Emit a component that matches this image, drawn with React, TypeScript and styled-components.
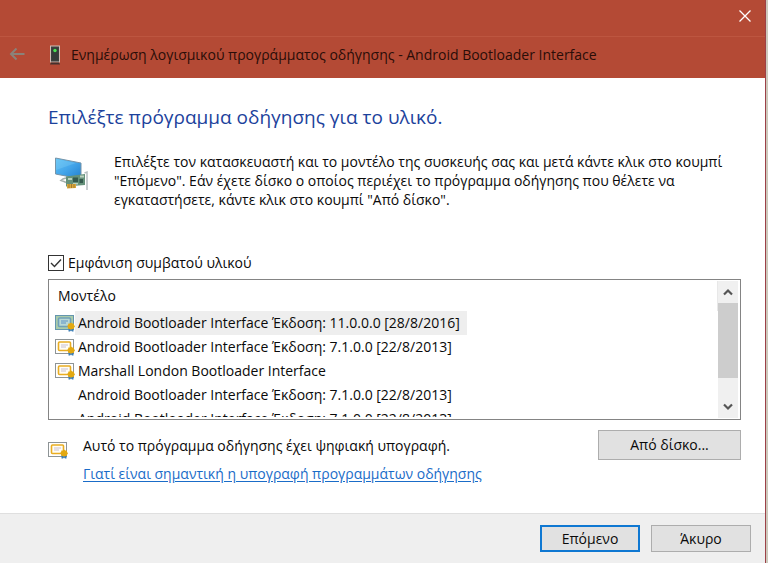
import React, { useState } from "react";
import styled, { createGlobalStyle } from "styled-components";

const GlobalStyle = createGlobalStyle`
  *, *::before, *::after { box-sizing: border-box; }
  body {
    margin: 0;
    background: #cdc9bc;
    color: #0a0a0a;
    font: 500 14px/20px "Open Sans", "Noto Sans", sans-serif;
  }
  button, input { font: inherit; color: inherit; }
`;

const Wizard = styled.main`
  display: flex;
  flex-direction: column;
  min-height: 100vh;
  margin-right: 2px;
  background: #fff;
  border-right: 1px solid #9c4148;
  overflow: hidden;
`;

const CaptionBar = styled.div`
  display: flex;
  justify-content: flex-end;
  height: 37px;
  background: #b44a35;
  border-bottom: 1px solid #bd5640;
`;

const CloseButton = styled.button`
  display: grid;
  place-items: center;
  width: 40px;
  height: 32px;
  padding: 0;
  border: 0;
  background: none;
`;

const TitleBar = styled.header`
  display: flex;
  align-items: center;
  height: 41px;
  padding: 0 9px 6px;
  background: #b44a35;
`;

const BackButton = styled.button`
  display: grid;
  width: 40px;
  padding: 0;
  border: 0;
  background: none;
`;

const WindowTitle = styled.h1`
  margin: 0 0 0 10px;
  font-size: 14px;
  font-weight: 500;
  line-height: 20px;
  color: #2a0d08;
  white-space: nowrap;
`;

const Content = styled.section`
  flex: 1;
  padding: 24px 24px 28px 48px;
`;

const Heading = styled.h2`
  margin: 0;
  font-size: 19px;
  font-weight: 400;
  line-height: 30px;
  color: #1c429c;
`;

const Intro = styled.div`
  display: flex;
  gap: 24px;
  margin-top: 20px;
  padding-left: 6px;

  svg { flex: none; margin-top: 4px; }
`;

const IntroText = styled.p`
  margin: 0;
  line-height: 19px;
  white-space: nowrap;
`;

const CheckLabel = styled.label`
  display: flex;
  align-items: center;
  gap: 4px;
  width: fit-content;
  margin-top: 44px;
`;

const CheckBox = styled.input`
  appearance: none;
  width: 16px;
  height: 16px;
  margin: 0;
  border: 1px solid #333;
  background: #fff;

  &:checked {
    background: url("data:image/svg+xml,%3Csvg xmlns='http://www.w3.org/2000/svg' viewBox='0 0 14 14'%3E%3Cpath d='M2 7l3.5 3.5L12 3.5' fill='none' stroke='%23333' stroke-width='1.4'/%3E%3C/svg%3E");
  }
`;

const ListFrame = styled.div`
  display: flex;
  height: 141px;
  margin-top: 6px;
  padding: 1px 2px 1px 6px;
  border: 1px solid #848484;
`;

const ListViewport = styled.div`
  flex: 1;
  height: 136px;
  overflow: hidden;
`;

const ModelTable = styled.table`
  width: 100%;
  border-collapse: collapse;
  font-weight: 400;
`;

const ModelHeader = styled.th`
  height: 30px;
  padding: 0 3px;
  border-right: 1px solid #e8e8e8;
  font-weight: 500;
  text-align: left;
`;

const ModelCell = styled.td`
  height: 24px;
  padding: 0;
`;

const ModelItem = styled.div<{ $selected: boolean }>`
  display: flex;
  align-items: center;
  width: fit-content;
  height: 24px;
  white-space: nowrap;

  svg { flex: none; }
  span {
    padding: 2px 7px 2px 3px;
    background: ${(p) => (p.$selected ? "#eee" : "transparent")};
  }
`;

const IconSlot = styled.i`
  width: 20px;
`;

const ScrollBar = styled.div`
  display: flex;
  flex-direction: column;
  width: 20px;
  background: #f0f0f0;
`;

const ScrollButton = styled.button`
  display: grid;
  place-items: center;
  height: 22px;
  padding: 0;
  border: 0;
  background: none;
`;

const ScrollTrack = styled.div`
  flex: 1;
`;

const ScrollThumb = styled.div`
  height: 75px;
  background: #cdcdcd;
`;

const SignatureRow = styled.div`
  display: flex;
  align-items: flex-start;
  margin-top: 10px;

  > svg { flex: none; margin-top: 11px; }
`;

const SignatureText = styled.div`
  flex: 1;
  margin-left: 15px;
  white-space: nowrap;

  p { margin: 6px 0 8px; }
`;

const Link = styled.a`
  color: #1a6cc8;
  text-decoration: underline;
  text-underline-offset: 2px;
`;

const PushButton = styled.button<{ $primary?: boolean; $wide?: boolean }>`
  width: ${(p) => (p.$wide ? 143 : 100)}px;
  height: ${(p) => (p.$wide ? 30 : 27)}px;
  padding: 0;
  border: ${(p) => (p.$primary ? "2px solid #0f78d2" : "1px solid #adadad")};
  background: #e1e1e1;
  line-height: 20px;
`;

const Footer = styled.footer`
  display: flex;
  justify-content: flex-end;
  gap: 11px;
  height: 50px;
  padding: 11px 14px 0;
  border-top: 1px solid #dfdfdf;
  background: #efefef;
`;

function CertificateIcon({ selected = false }: { selected?: boolean }) {
  return (
    <svg width="20" height="18" viewBox="0 0 20 18" aria-hidden="true">
      <rect x=".5" y="1.5" width="18" height="14" fill={selected ? "#a9cba9" : "#fff"} stroke={selected ? "#6496ae" : "#8e9496"} />
      <rect x="3.5" y="4" width="12" height="8.500" rx="1" fill={selected ? "#b9d8d5" : "#fffdf5"} stroke={selected ? "#6fa1b8" : "#e9ad22"} strokeWidth="1.600" />
      <path d="M6 7h7M6 9h5" stroke={selected ? "#5d93c8" : "#c9bfcf"} />
      <path d="M13.500 13h5v4.500h-1.500l-1-1-1 1h-1.500z" fill="#3e7fb5" />
      <path d="M16 8.500l1.300.9 1.600.2.200 1.500.9 1.400-1 1.200-.3 1.300-1.500.1-1.200.7-1.300-.8-1.500-.2-.2-1.500-.8-1.200.9-1.200.3-1.400 1.500-.1z" fill="#e3a912" />
    </svg>
  );
}

function DeviceIcon() {
  return (
    <svg width="12" height="20" viewBox="0 0 12 20" aria-hidden="true">
      <rect x="1.500" y="1" width="9" height="16" fill="#3b403e" stroke="#cfbdb6" />
      <path d="M3 3h6v12H3z" fill="#343c39" />
      <circle cx="6" cy="5.500" r="1.700" fill="#49e553" />
      <path d="M2 17.500h8l1 2H1z" fill="#42302d" />
    </svg>
  );
}

function AdapterIcon() {
  return (
    <svg width="36" height="36" viewBox="0 0 36 36" aria-hidden="true">
      <defs>
        <linearGradient id="screen" x1="0" y1="0" x2="1" y2="1">
          <stop stopColor="#62c4f4" />
          <stop offset=".5" stopColor="#43a5ea" />
          <stop offset="1" stopColor="#217fce" />
        </linearGradient>
      </defs>
      <path d="M1.500 2l25.500 5v16L1.500 18z" fill="url(#screen)" stroke="#7794a8" />
      <path d="M2 3l20 4L2 14z" fill="#8bd3f7" opacity=".3" />
      <path d="M12 22l-3 1-2 1.500 3 1 2 1" fill="none" stroke="#a4afac" strokeWidth="1.500" />
      <path d="M12 20.500l19-2.500v11l-19 1.500z" fill="#64917a" />
      <path d="M14 22h4v2h-4zM26 19.500h4v2h-4zM19 27h5v1.500h-5z" fill="#b9d0bd" />
      <path d="M19 21.500h5v4.500h-5zM25.500 23h3.500v4h-3.500z" fill="#34594d" />
      <path d="M13 28h9v4l-9 .5z" fill="#d9a83e" />
      <path d="M15 28v4M17.500 28v4M20 28v4" stroke="#a57c2d" />
      <path d="M30.500 17l2.500-1v18" fill="none" stroke="#b6bec1" strokeWidth="1.500" />
    </svg>
  );
}

function Chevron({ down = false }: { down?: boolean }) {
  return (
    <svg width="12" height="8" viewBox="0 0 12 8" aria-hidden="true">
      <path d={down ? "M2 1.500l4 4 4-4" : "M2 6.500l4-4 4 4"} fill="none" stroke="#555" strokeWidth="2.200" />
    </svg>
  );
}

const models = [
  { name: "Android Bootloader Interface Έκδοση: 11.0.0.0 [28/8/2016]", signed: true },
  { name: "Android Bootloader Interface Έκδοση: 7.1.0.0 [22/8/2013]", signed: true },
  { name: "Marshall London Bootloader Interface", signed: true },
  { name: "Android Bootloader Interface Έκδοση: 7.1.0.0 [22/8/2013]", signed: false },
  { name: "Android Bootloader Interface Έκδοση: 7.1.0.0 [22/8/2013]", signed: false },
];

export default function App() {
  const [compatible, setCompatible] = useState(true);
  const [selected, setSelected] = useState(0);

  return (
    <>
      <GlobalStyle />
      <Wizard>
        <CaptionBar>
          <CloseButton aria-label="Κλείσιμο">
            <svg width="14" height="14" viewBox="0 0 14 14">
              <path d="M1.500 1.500l11 11m0-11l-11 11" stroke="#fff" strokeWidth="1.300" />
            </svg>
          </CloseButton>
        </CaptionBar>
        <TitleBar>
          <BackButton aria-label="Πίσω">
            <svg width="17" height="14" viewBox="0 0 17 14">
              <path d="M15.500 6H2M7.500 .5L2 6l5.500 5.500" fill="none" stroke="#8b8279" strokeWidth="2" />
            </svg>
          </BackButton>
          <DeviceIcon />
          <WindowTitle>Ενημέρωση λογισμικού προγράμματος οδήγησης - Android Bootloader Interface</WindowTitle>
        </TitleBar>
        <Content>
          <Heading>Επιλέξτε πρόγραμμα οδήγησης για το υλικό.</Heading>
          <Intro>
            <AdapterIcon />
            <IntroText>
              Επιλέξτε τον κατασκευαστή και το μοντέλο της συσκευής σας και μετά κάντε κλικ στο κουμπί
              <br />
              "Επόμενο". Εάν έχετε δίσκο ο οποίος περιέχει το πρόγραμμα οδήγησης που θέλετε να
              <br />
              εγκαταστήσετε, κάντε κλικ στο κουμπί "Από δίσκο".
            </IntroText>
          </Intro>
          <CheckLabel>
            <CheckBox type="checkbox" checked={compatible} onChange={(e) => setCompatible(e.target.checked)} />
            Εμφάνιση συμβατού υλικού
          </CheckLabel>
          <ListFrame>
            <ListViewport>
              <ModelTable>
                <thead>
                  <tr>
                    <ModelHeader scope="col">Μοντέλο</ModelHeader>
                  </tr>
                </thead>
                <tbody>
                  {models.map((model, i) => (
                    <tr key={i} onClick={() => setSelected(i)}>
                      <ModelCell>
                        <ModelItem $selected={i === selected}>
                          {model.signed ? <CertificateIcon selected={i === selected} /> : <IconSlot />}
                          <span>{model.name}</span>
                        </ModelItem>
                      </ModelCell>
                    </tr>
                  ))}
                </tbody>
              </ModelTable>
            </ListViewport>
            <ScrollBar>
              <ScrollButton aria-label="Κύλιση επάνω">
                <Chevron />
              </ScrollButton>
              <ScrollTrack>
                <ScrollThumb />
              </ScrollTrack>
              <ScrollButton aria-label="Κύλιση κάτω">
                <Chevron down />
              </ScrollButton>
            </ScrollBar>
          </ListFrame>
          <SignatureRow>
            <CertificateIcon />
            <SignatureText>
              <p>Αυτό το πρόγραμμα οδήγησης έχει ψηφιακή υπογραφή.</p>
              <Link href="#signing">Γιατί είναι σημαντική η υπογραφή προγραμμάτων οδήγησης</Link>
            </SignatureText>
            <PushButton $wide>Από δίσκο...</PushButton>
          </SignatureRow>
        </Content>
        <Footer>
          <PushButton $primary>Επόμενο</PushButton>
          <PushButton>Άκυρο</PushButton>
        </Footer>
      </Wizard>
    </>
  );
}
